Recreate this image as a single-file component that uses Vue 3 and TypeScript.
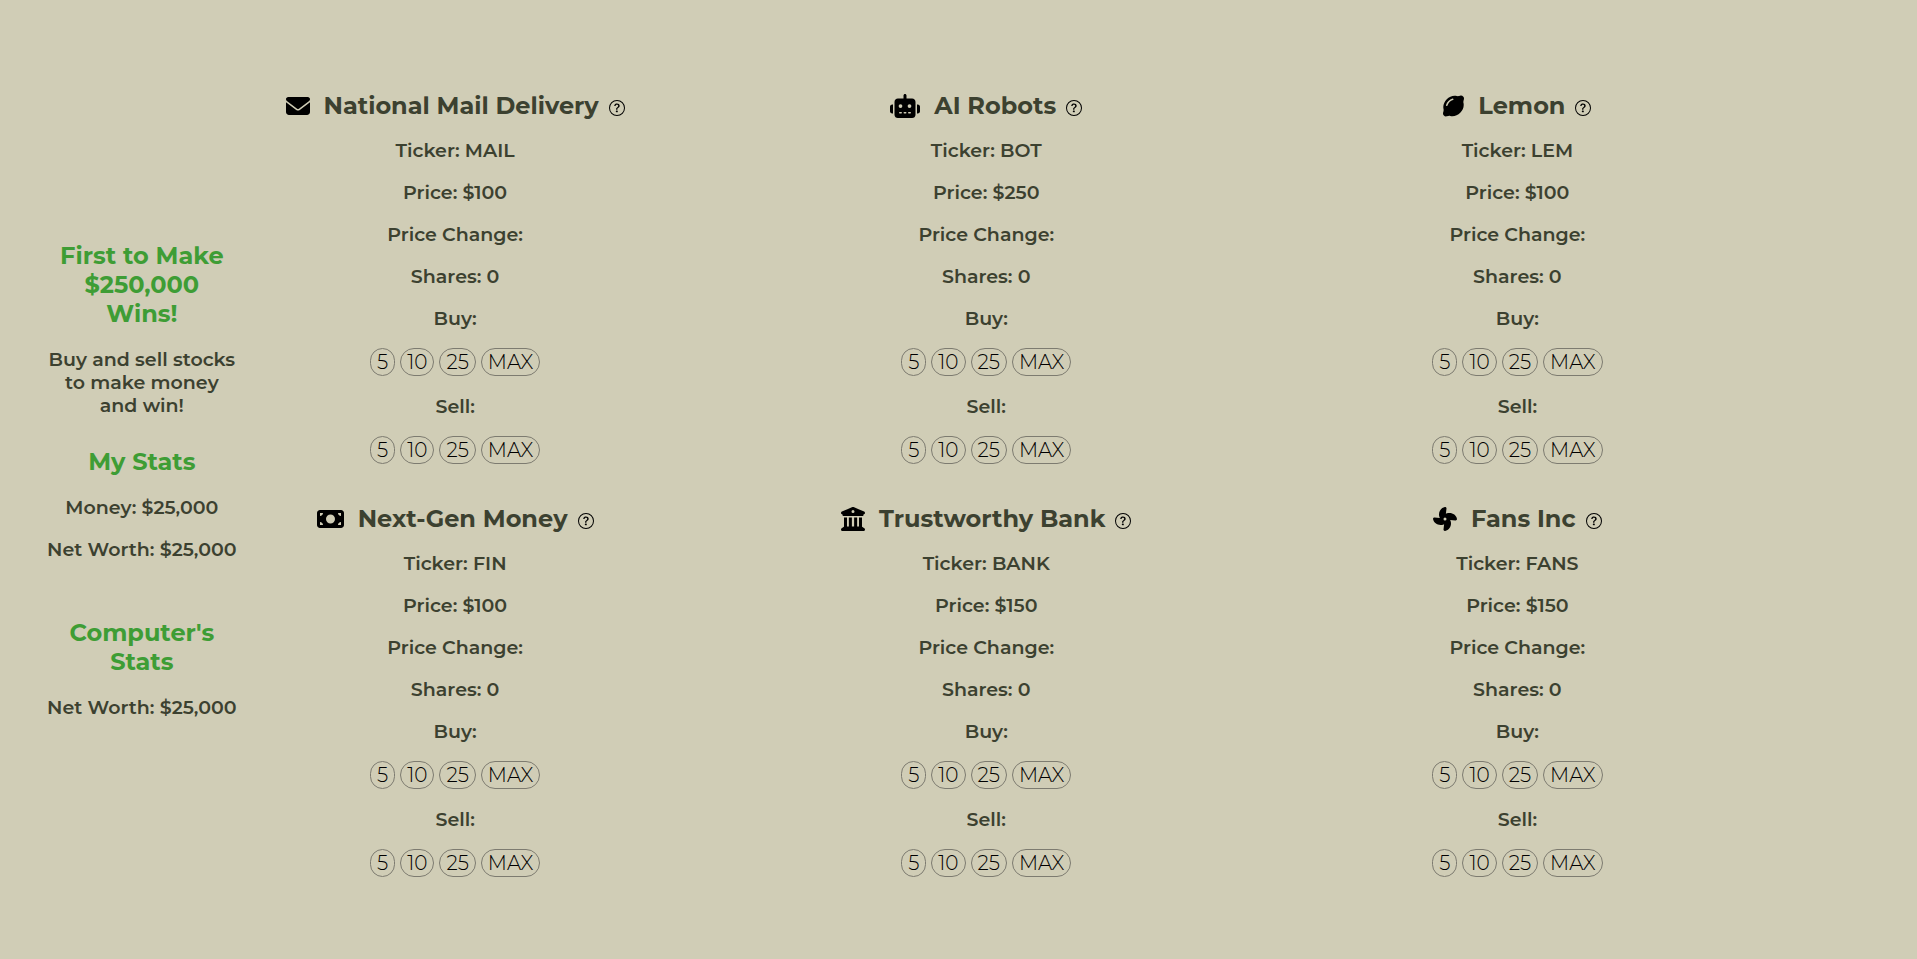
<script setup lang="ts">
import { reactive, ref } from 'vue'

interface Company {
  name: string
  ticker: string
  price: number
  shares: number
  iconWidth: number
  icon: string
}

const companies = reactive<Company[]>([
  {
    name: 'National Mail Delivery', ticker: 'MAIL', price: 100, shares: 0, iconWidth: 512,
    icon: 'M48 64C21.5 64 0 85.5 0 112c0 15.1 7.1 29.3 19.2 38.4L236.8 313.6c11.4 8.5 27 8.5 38.4 0L492.8 150.4c12.1-9.1 19.2-23.3 19.2-38.4c0-26.5-21.5-48-48-48H48zM0 176V384c0 35.3 28.7 64 64 64H448c35.3 0 64-28.7 64-64V176L294.4 339.2c-22.8 17.1-54 17.1-76.8 0L0 176z',
  },
  {
    name: 'AI Robots', ticker: 'BOT', price: 250, shares: 0, iconWidth: 640,
    icon: 'M320 0c17.7 0 32 14.3 32 32V96H472c39.8 0 72 32.2 72 72V440c0 39.8-32.2 72-72 72H168c-39.8 0-72-32.2-72-72V168c0-39.8 32.2-72 72-72H288V32c0-17.7 14.3-32 32-32zM208 384c-8.8 0-16 7.2-16 16s7.2 16 16 16h32c8.8 0 16-7.2 16-16s-7.2-16-16-16H208zm96 0c-8.8 0-16 7.2-16 16s7.2 16 16 16h32c8.8 0 16-7.2 16-16s-7.2-16-16-16H304zm96 0c-8.8 0-16 7.2-16 16s7.2 16 16 16h32c8.8 0 16-7.2 16-16s-7.2-16-16-16H400zM264 256a40 40 0 1 0 -80 0 40 40 0 1 0 80 0zm152 40a40 40 0 1 0 0-80 40 40 0 1 0 0 80zM48 224H64V416H48c-26.5 0-48-21.5-48-48V272c0-26.5 21.5-48 48-48zm544 0c26.5 0 48 21.5 48 48v96c0 26.5-21.5 48-48 48H576V224h16z',
  },
  {
    name: 'Lemon', ticker: 'LEM', price: 100, shares: 0, iconWidth: 448,
    icon: 'M448 96c0-35.3-28.7-64-64-64c-6.6 0-13 1-19 2.9c-22.5 7-48.1 14.9-71 9c-75.2-19.1-156.4 11-213.7 68.3S-7.2 250.8 11.9 326c5.8 22.9-2 48.4-9 71C1 403 0 409.4 0 416c0 35.3 28.7 64 64 64c6.6 0 13-1 19.1-2.9c22.5-7 48.1-14.9 71-9c75.2 19.1 156.4-11 213.7-68.3s87.5-138.5 68.3-213.7c-5.8-22.9 2-48.4 9-71c1.9-6 2.9-12.4 2.9-19.1zM212.5 127.4c-54.6 16-101.1 62.5-117.1 117.1C92.9 253 84 257.8 75.5 255.4S62.2 244 64.6 235.5c19.1-65.1 73.7-119.8 138.9-138.9c8.5-2.5 17.4 2.4 19.9 10.9s-2.4 17.4-10.9 19.9z',
  },
  {
    name: 'Next-Gen Money', ticker: 'FIN', price: 100, shares: 0, iconWidth: 576,
    icon: 'M64 64C28.7 64 0 92.7 0 128V384c0 35.3 28.7 64 64 64H512c35.3 0 64-28.7 64-64V128c0-35.3-28.7-64-64-64H64zm64 320H64V320c35.3 0 64 28.7 64 64zM64 192V128h64c0 35.3-28.7 64-64 64zM448 384c0-35.3 28.7-64 64-64v64H448zm64-192c-35.3 0-64-28.7-64-64h64v64zM288 160a96 96 0 1 1 0 192 96 96 0 1 1 0-192z',
  },
  {
    name: 'Trustworthy Bank', ticker: 'BANK', price: 150, shares: 0, iconWidth: 512,
    icon: 'M243.4 2.6l-224 96c-14 6-21.8 21-18.7 35.8S16.8 160 32 160v8c0 13.3 10.7 24 24 24H456c13.3 0 24-10.7 24-24v-8c15.2 0 28.3-10.7 31.3-25.6s-4.8-29.9-18.7-35.8l-224-96c-8-3.4-17.2-3.4-25.2 0zM128 224H64V420.3c-.6 .3-1.2 .7-1.8 1.1l-48 32c-11.7 7.8-17 22.4-12.9 35.9S17.9 512 32 512H480c14.1 0 26.5-9.2 30.6-22.7s-1.1-28.1-12.9-35.9l-48-32c-.6-.4-1.2-.7-1.8-1.1V224H384V416H344V224H280V416H232V224H168V416H128V224zM256 64a32 32 0 1 1 0 64 32 32 0 1 1 0-64z',
  },
  {
    name: 'Fans Inc', ticker: 'FANS', price: 150, shares: 0, iconWidth: 512,
    icon: 'M258.6 0c-1.7 0-3.4 .1-5.1 .5C168 17 115.6 102.3 130.5 189.3c2.9 17 8.4 32.9 15.9 47.4L32 224H29.4C13.2 224 0 237.2 0 253.4c0 1.7 .1 3.4 .5 5.1C17 344 102.3 396.4 189.3 381.5c17-2.9 32.9-8.4 47.4-15.9L224 480v2.6c0 16.2 13.2 29.4 29.4 29.4c1.7 0 3.4-.1 5.1-.5C344 495 396.4 409.7 381.5 322.7c-2.9-17-8.4-32.9-15.9-47.4L480 288h2.6c16.2 0 29.4-13.2 29.4-29.4c0-1.7-.1-3.4-.5-5.1C495 168 409.7 115.6 322.7 130.5c-17 2.9-32.9 8.4-47.4 15.9L288 32V29.4C288 13.2 274.8 0 258.6 0zM256 224a32 32 0 1 1 0 64 32 32 0 1 1 0-64z',
  },
])

const amounts = [5, 10, 25, 'MAX'] as const
type Amount = (typeof amounts)[number]

const money = ref(25000)
const netWorth = ref(25000)
const computerNetWorth = ref(25000)

const dollars = (value: number): string => '$' + value.toLocaleString('en-US')

function buy(company: Company, amount: Amount): void {
  const affordable = Math.floor(money.value / company.price)
  const count = amount === 'MAX' ? affordable : amount
  if (count > affordable) return
  company.shares += count
  money.value -= count * company.price
}

function sell(company: Company, amount: Amount): void {
  const count = amount === 'MAX' ? company.shares : amount
  if (count > company.shares) return
  company.shares -= count
  money.value += count * company.price
}
</script>

<template>
  <div class="page">
    <aside class="sidebar">
      <section class="stats goal">
        <h2>First to Make $250,000 Wins!</h2>
        <h3>Buy and sell stocks to make money and win!</h3>
      </section>
      <section class="stats player">
        <h2>My Stats</h2>
        <h3>Money: {{ dollars(money) }}</h3>
        <h3>Net Worth: {{ dollars(netWorth) }}</h3>
      </section>
      <section class="stats">
        <h2>Computer's Stats</h2>
        <h3>Net Worth: {{ dollars(computerNetWorth) }}</h3>
      </section>
    </aside>

    <main class="market">
      <article v-for="company in companies" :key="company.ticker" class="company">
        <header class="title">
          <svg class="logo" :viewBox="`0 0 ${company.iconWidth} 512`" aria-hidden="true">
            <path :d="company.icon" />
          </svg>
          <h2>{{ company.name }}</h2>
          <button class="help" type="button" :aria-label="`About ${company.name}`">
            <svg viewBox="0 0 16 16" aria-hidden="true">
              <path d="M8 15A7 7 0 1 1 8 1a7 7 0 0 1 0 14m0 1A8 8 0 1 0 8 0a8 8 0 0 0 0 16" />
              <path d="M5.255 5.786a.237.237 0 0 0 .241.247h.825c.138 0 .248-.113.266-.25.09-.656.54-1.134 1.342-1.134.686 0 1.314.343 1.314 1.168 0 .635-.374.927-.965 1.371-.673.489-1.206 1.06-1.168 1.987l.003.217a.25.25 0 0 0 .25.246h.811a.25.25 0 0 0 .25-.25v-.105c0-.718.273-.927 1.01-1.486.609-.463 1.244-.977 1.244-2.056 0-1.511-1.276-2.241-2.673-2.241-1.267 0-2.655.59-2.75 2.286m1.557 5.763c0 .533.425.927 1.01.927.609 0 1.028-.394 1.028-.927 0-.552-.42-.94-1.029-.94-.584 0-1.009.388-1.009.94" />
            </svg>
          </button>
        </header>
        <h3>Ticker: {{ company.ticker }}</h3>
        <h3>Price: ${{ company.price }}</h3>
        <h3>Price Change:</h3>
        <h3>Shares: {{ company.shares }}</h3>
        <h3>Buy:</h3>
        <div class="amounts">
          <button v-for="amount in amounts" :key="amount" type="button" @click="buy(company, amount)">{{ amount }}</button>
        </div>
        <h3>Sell:</h3>
        <div class="amounts">
          <button v-for="amount in amounts" :key="amount" type="button" @click="sell(company, amount)">{{ amount }}</button>
        </div>
      </article>
    </main>
  </div>
</template>

<style>
body {
  margin: 0;
  background: #d0cdb6;
}
</style>

<style scoped>
.page {
  box-sizing: border-box;
  min-height: 100vh;
  display: flex;
  align-items: center;
  font-family: Montserrat, Inter, "Liberation Sans", sans-serif;
  color: #3c4130;
  text-align: center;
}

h2,
h3 {
  margin: 0;
}

h2 {
  font-size: 24px;
  font-weight: 700;
  line-height: 29px;
}

h3 {
  font-size: 19px;
  font-weight: 600;
  line-height: 23px;
}

.sidebar {
  width: 10%;
  margin-left: 2.4%;
  margin-right: 0.1%;
}

.stats {
  display: flex;
  flex-direction: column;
  gap: 19px;
}

.stats h2 {
  margin-bottom: 1px;
  color: #3e9d35;
}

.goal {
  margin-bottom: 30px;
}

.player {
  margin-bottom: 57px;
}

.market {
  width: 77.9%;
  display: grid;
  grid-template-columns: repeat(3, 1fr);
  column-gap: 6.7%;
  row-gap: 40px;
  padding-top: 9px;
}

.company {
  display: flex;
  flex-direction: column;
  gap: 19px;
}

.title {
  display: flex;
  justify-content: center;
  align-items: center;
}

.logo {
  height: 24px;
  margin-right: 14px;
}

.help {
  display: flex;
  margin-left: 10px;
  padding: 4px 0 0;
  border: 0;
  background: none;
  cursor: pointer;
}

.help svg {
  width: 16px;
  height: 16px;
}

.amounts {
  display: flex;
  justify-content: center;
  gap: 5px;
  margin-top: -1px;
}

.amounts button {
  box-sizing: border-box;
  height: 28px;
  padding: 0 6px;
  border: 1px solid #7d7b70;
  border-radius: 14px;
  background: none;
  color: #000;
  font-family: inherit;
  font-size: 20px;
  font-weight: 300;
  line-height: 24px;
  cursor: pointer;
}
</style>
